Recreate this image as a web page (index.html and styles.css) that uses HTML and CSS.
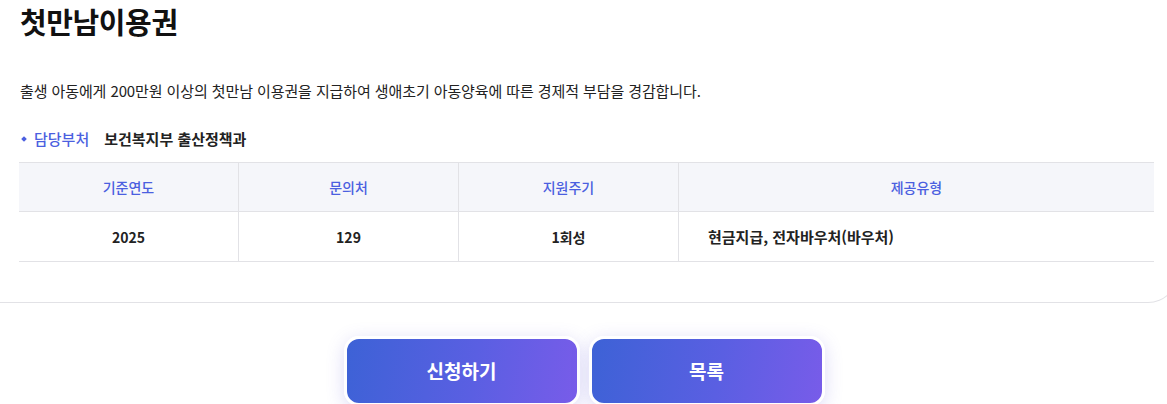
FILE: index.html
```html
<!DOCTYPE html>
<html lang="ko">
<head>
<meta charset="utf-8">
<title>첫만남이용권</title>
<link rel="stylesheet" href="styles.css">
</head>
<body>
<div class="page">
  <section class="card">
    <h1 class="title">첫만남이용권</h1>
    <p class="desc">출생 아동에게 200만원 이상의 첫만남 이용권을 지급하여 생애초기 아동양육에 따른 경제적 부담을 경감합니다.</p>
    <div class="dept">
      <span class="dept-label">담당부처</span>
      <span class="dept-value">보건복지부 출산정책과</span>
    </div>
    <table class="info">
      <thead>
        <tr>
          <th class="c1">기준연도</th>
          <th class="c2">문의처</th>
          <th class="c3">지원주기</th>
          <th class="c4">제공유형</th>
        </tr>
      </thead>
      <tbody>
        <tr>
          <td>2025</td>
          <td>129</td>
          <td>1회성</td>
          <td class="left">현금지급, 전자바우처(바우처)</td>
        </tr>
      </tbody>
    </table>
  </section>
  <div class="actions">
    <button class="btn">신청하기</button>
    <button class="btn">목록</button>
  </div>
</div>
</body>
</html>
```

FILE: styles.css
```css
html, body {
  margin: 0;
  padding: 0;
  background: #ffffff;
  overflow: hidden;
}
body {
  font-family: "Noto Sans CJK KR", "Noto Sans", sans-serif;
  color: #222222;
}
.page {
  width: 1167px;
  height: 404px;
  overflow: hidden;
}
.card {
  box-sizing: border-box;
  width: 1218px;
  margin-left: -40px;
  padding: 0 23px 40px 58px;
  border: 1px solid #e2e2e6;
  border-top: none;
  border-radius: 0 0 30px 30px;
  background: #ffffff;
}
.title {
  margin: 0;
  font-size: 29px;
  line-height: 42px;
  font-weight: 700;
  color: #111111;
  letter-spacing: -0.4px;
  padding-left: 1px;
}
.desc {
  margin: 38px 0 0 1px;
  font-size: 15px;
  line-height: 22px;
  color: #222222;
  letter-spacing: -0.1px;
}
.dept {
  display: flex;
  align-items: center;
  margin-top: 26px;
  padding-left: 3px;
  font-size: 15px;
  line-height: 22px;
}
.dept-label {
  position: relative;
  padding-left: 12px;
  color: #4b5fe0;
  font-weight: 500;
}
.dept-label::before {
  content: "";
  position: absolute;
  left: 0;
  top: 9px;
  width: 4px;
  height: 4px;
  background: #4b5fe0;
  transform: rotate(45deg);
}
.dept-value {
  margin-left: 15px;
  font-weight: 700;
  color: #222222;
}
.info {
  width: 1135px;
  margin-top: 12px;
  border-collapse: collapse;
  table-layout: fixed;
}
.info th, .info td {
  padding: 0;
  text-align: center;
  border-top: 1px solid #e2e2e6;
  border-bottom: 1px solid #e2e2e6;
  border-left: 1px solid #e2e2e6;
}
.info th:first-child, .info td:first-child {
  border-left: none;
}
.info th {
  height: 48px;
  background: #f5f6fa;
  color: #4b5fe0;
  font-weight: 500;
  font-size: 14px;
}
.info td {
  height: 49px;
  color: #222222;
  font-weight: 700;
  font-size: 14px;
}
.info td.left {
  text-align: left;
  padding-left: 29px;
  font-size: 15px;
}
.c1, .c2, .c3 { width: 219px; }
.c4 { width: auto; }
.actions {
  display: flex;
  justify-content: center;
  gap: 9px;
  margin-top: 33px;
  padding-left: 1px;
}
.btn {
  box-sizing: border-box;
  width: 236px;
  height: 70px;
  border: 3px solid #ffffff;
  border-radius: 15px;
  background: linear-gradient(100deg, #3d62d6 0%, #5a5fe2 55%, #785ce9 100%);
  color: #ffffff;
  font-family: "Noto Sans CJK KR", "Noto Sans", sans-serif;
  font-size: 19px;
  font-weight: 700;
  padding: 0 0 2px 0;
  box-shadow: 0 4px 18px rgba(100, 90, 220, 0.22);
}
```
